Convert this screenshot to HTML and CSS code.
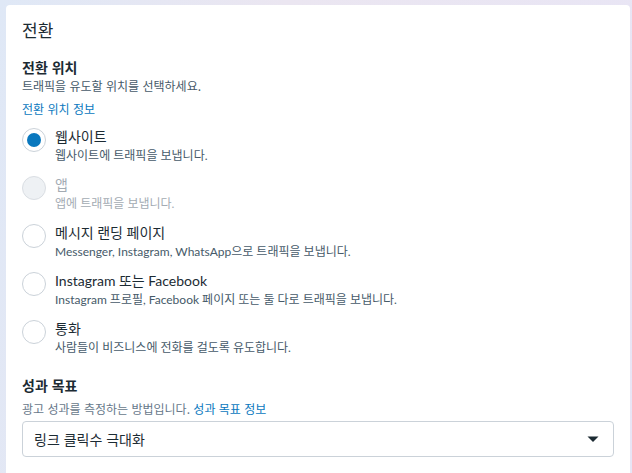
FILE: index.html
```html
<!DOCTYPE html>
<html lang="ko">
<head>
<meta charset="utf-8">
<link rel="stylesheet" href="styles.css">
</head>
<body>
<div class="card">
  <h2 class="title">전환</h2>
  <div class="label">전환 위치</div>
  <div class="desc">트래픽을 유도할 위치를 선택하세요.</div>
  <a class="link link-block">전환 위치 정보</a>
  <div class="options">
    <div class="option">
      <span class="radio checked"><span class="dot"></span></span>
      <div class="opt-text">
        <div class="opt-label">웹사이트</div>
        <div class="opt-desc">웹사이트에 트래픽을 보냅니다.</div>
      </div>
    </div>
    <div class="option disabled">
      <span class="radio"></span>
      <div class="opt-text">
        <div class="opt-label">앱</div>
        <div class="opt-desc">앱에 트래픽을 보냅니다.</div>
      </div>
    </div>
    <div class="option">
      <span class="radio"></span>
      <div class="opt-text">
        <div class="opt-label">메시지 랜딩 페이지</div>
        <div class="opt-desc">Messenger, Instagram, WhatsApp으로 트래픽을 보냅니다.</div>
      </div>
    </div>
    <div class="option">
      <span class="radio"></span>
      <div class="opt-text">
        <div class="opt-label">Instagram 또는 Facebook</div>
        <div class="opt-desc">Instagram 프로필, Facebook 페이지 또는 둘 다로 트래픽을 보냅니다.</div>
      </div>
    </div>
    <div class="option">
      <span class="radio"></span>
      <div class="opt-text">
        <div class="opt-label">통화</div>
        <div class="opt-desc">사람들이 비즈니스에 전화를 걸도록 유도합니다.</div>
      </div>
    </div>
  </div>
  <div class="label label-2">성과 목표</div>
  <div class="desc desc-2">광고 성과를 측정하는 방법입니다. <a class="link">성과 목표 정보</a></div>
  <div class="select">
    <span class="select-text">링크 클릭수 극대화</span>
    <svg class="caret" width="12" height="8" viewBox="0 0 12 8"><path d="M0.5 1.5 L11.5 1.5 L6 7 Z" fill="#1c2b33"/></svg>
  </div>
</div>
</body>
</html>
```
FILE: styles.css
```css
html, body {
  margin: 0;
  padding: 0;
}
body {
  width: 632px;
  height: 473px;
  overflow: hidden;
  background: linear-gradient(100deg, #dfe8f6 0%, #ebe6f1 40%, #e8e5f5 100%);
  font-family: "Lato", "Noto Sans CJK KR", sans-serif;
  color: #1c2b33;
}
.card {
  margin: 5px 0 0 6px;
  width: 624px;
  height: 480px;
  box-sizing: border-box;
  background: #ffffff;
  border-radius: 4px 4px 0 0;
  padding: 13px 16px 0 16px;
}
.title {
  margin: 0;
  font-family: "Noto Sans CJK KR", sans-serif;
  font-size: 17px;
  line-height: 24px;
  font-weight: 400;
  color: #1c2b33;
}
.label {
  margin-top: 15px;
  font-family: "Noto Sans CJK KR", sans-serif;
  font-size: 14px;
  line-height: 20px;
  font-weight: 700;
  color: #1c2b33;
}
.desc {
  font-family: "Noto Sans CJK KR", sans-serif;
  font-size: 12px;
  line-height: 18px;
  color: #465a69;
}
.link {
  font-family: "Noto Sans CJK KR", sans-serif;
  font-size: 12px;
  line-height: 18px;
  color: #0a78be;
  text-decoration: none;
}
.link-block {
  display: block;
  margin-top: 5px;
}
.options {
  margin-top: 9px;
  display: flex;
  flex-direction: column;
  gap: 10px;
}
.option {
  display: flex;
  align-items: flex-start;
  gap: 9px;
}
.radio {
  flex: none;
  box-sizing: border-box;
  width: 24px;
  height: 24px;
  margin-top: 1px;
  border-radius: 50%;
  border: 1px solid #cbd2d9;
  background: #ffffff;
  display: flex;
  align-items: center;
  justify-content: center;
}
.radio .dot {
  width: 14px;
  height: 14px;
  border-radius: 50%;
  background: #0a78be;
}
.option.disabled .radio {
  background: #eef1f4;
  border-color: #dadee3;
}
.opt-label {
  font-family: "Lato", "Noto Sans CJK KR", sans-serif;
  font-size: 14px;
  line-height: 20px;
  color: #1c2b33;
}
.opt-desc {
  font-family: "Lato", "Noto Sans CJK KR", sans-serif;
  font-size: 12px;
  line-height: 18px;
  color: #465a69;
}
.option.disabled .opt-label,
.option.disabled .opt-desc {
  color: #a3abb3;
}
.label-2 {
  margin-top: 18px;
}
.desc-2 {
  margin-top: 5px;
  color: #67788a;
}
.select {
  margin-top: 3px;
  box-sizing: border-box;
  height: 36px;
  border: 1px solid #cbd2d9;
  border-radius: 4px;
  display: flex;
  align-items: center;
  justify-content: space-between;
  padding: 0 14px 0 11px;
}
.select-text {
  font-family: "Noto Sans CJK KR", sans-serif;
  font-size: 14px;
  color: #1c2b33;
}
.caret {
  display: block;
}
```
